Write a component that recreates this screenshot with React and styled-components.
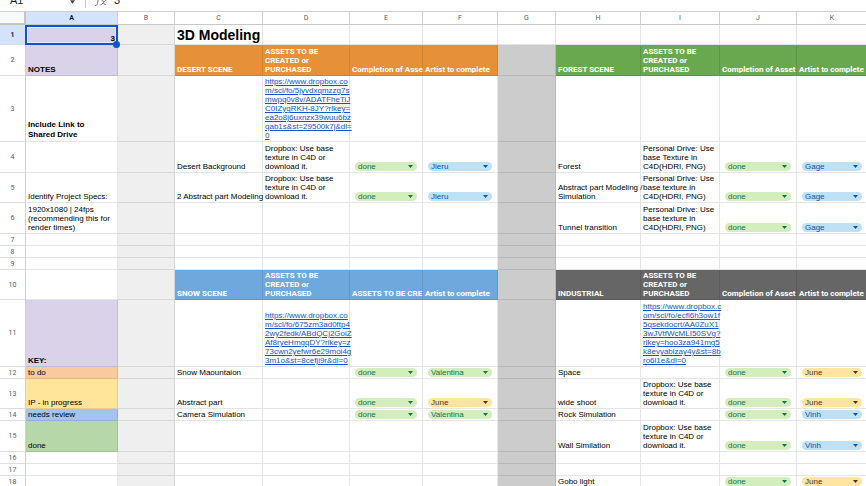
import styled, { createGlobalStyle } from 'styled-components';

const columns = [
  { name: 'A', width: 92 },
  { name: 'B', width: 57 },
  { name: 'C', width: 88 },
  { name: 'D', width: 87 },
  { name: 'E', width: 73 },
  { name: 'F', width: 75 },
  { name: 'G', width: 58 },
  { name: 'H', width: 85 },
  { name: 'I', width: 79 },
  { name: 'J', width: 77 },
  { name: 'K' },
];

const colors = {
  purple: '#d9d2e9',
  lightGrey: '#efefef',
  grey: '#cccccc',
  orange: '#e69138',
  green: '#6aa84f',
  blue: '#6fa8dc',
  dark: '#666666',
  todo: '#f9cb9c',
  progress: '#ffe599',
  review: '#a4c2f4',
  done: '#b6d7a8',
};

const chipColors = {
  done: { bg: '#d4edbc', text: '#11734b' },
  Valentina: { bg: '#d4edbc', text: '#11734b' },
  June: { bg: '#ffe5a0', text: '#473822' },
  Jieru: { bg: '#bfe1f6', text: '#0a53a8' },
  Gage: { bg: '#bfe1f6', text: '#0a53a8' },
  Vinh: { bg: '#bfe1f6', text: '#0a53a8' },
};

const artists = ['Jieru', 'Gage', 'Valentina', 'June', 'Vinh'];
const statuses = ['to do', 'IP - in progress', 'needs review', 'done'];

const assets = 'ASSETS TO BE\nCREATED or\nPURCHASED';
const dropbox = 'Dropbox: Use base\ntexture in C4D or\ndownload it.';
const drive = 'Personal Drive: Use\nbase texture in\nC4D(HDRI, PNG)';

const head = (text, bg) => ({ text, bg, bold: true, white: true });
const chip = (value) => ({ chip: value });

const rows = [
  {
    height: 20,
    cells: {
      A: { text: '3', bg: colors.purple, bold: true, right: true, selected: true },
      C: { text: '3D Modeling', title: true },
    },
  },
  {
    height: 31,
    cells: {
      A: { text: 'NOTES', bg: colors.purple, bold: true },
      C: head('DESERT SCENE', colors.orange),
      D: head(assets, colors.orange),
      E: head('Completion of Asse', colors.orange),
      F: head('Artist to complete', colors.orange),
      H: head('FOREST SCENE', colors.green),
      I: head(assets, colors.green),
      J: head('Completion of Asset', colors.green),
      K: head('Artist to complete', colors.green),
    },
  },
  {
    height: 66,
    cells: {
      A: { text: 'Include Link to\nShared Drive', bold: true, loose: true },
      D: {
        link: 'https://www.dropbox.co\nm/scl/fo/5jyvdxqmzzg7s\nmwpq0v8v/ADATFheTiJ\nC0IZygRKH-8JY?rlkey=\nea2o8j6uxnzx39wuu6bz\nqab1s&st=29500k7j&dl=\n0',
      },
    },
  },
  {
    height: 31,
    cells: {
      C: { text: 'Desert Background' },
      D: { text: dropbox },
      E: chip('done'),
      F: chip('Jieru'),
      H: { text: 'Forest' },
      I: { text: 'Personal Drive: Use\nbase Texture in\nC4D(HDRI, PNG)' },
      J: chip('done'),
      K: chip('Gage'),
    },
  },
  {
    height: 30,
    cells: {
      A: { text: 'Identify Project Specs:' },
      C: { text: '2 Abstract part Modeling' },
      D: { text: dropbox },
      E: chip('done'),
      F: chip('Jieru'),
      H: { text: 'Abstract part Modeling /\nSimulation' },
      I: { text: drive },
      J: chip('done'),
      K: chip('Gage'),
    },
  },
  {
    height: 31,
    cells: {
      A: { text: '1920x1080 | 24fps\n(recommending this for\nrender times)' },
      H: { text: 'Tunnel transition' },
      I: { text: drive },
      J: chip('done'),
      K: chip('Gage'),
    },
  },
  { height: 12, cells: {} },
  { height: 12, cells: {} },
  { height: 12, cells: {} },
  {
    height: 30,
    cells: {
      C: head('SNOW SCENE', colors.blue),
      D: head(assets, colors.blue),
      E: head('ASSETS TO BE CRE', colors.blue),
      F: head('Artist to complete', colors.blue),
      H: head('INDUSTRIAL', colors.dark),
      I: head(assets, colors.dark),
      J: head('Completion of Asset', colors.dark),
      K: head('Artist to complete', colors.dark),
    },
  },
  {
    height: 67,
    cells: {
      A: { text: 'KEY:', bg: colors.purple, bold: true },
      D: {
        link: 'https://www.dropbox.co\nm/scl/fo/675zm3ad0ftp4\n2wy2fedk/ABdQCj2GoiZ\nAf8ryeHmgqDY?rlkey=z\n73cwn2yefwr6e29moi4g\n3m1o&st=8cefji9r&dl=0',
      },
      I: {
        link: 'https://www.dropbox.c\nom/scl/fo/ecfl6h3ow1f\n5qsekdocrt/AA0ZuX1\n3wJVtfWcMLI50SVg?\nrlkey=hoo3za941mg5\nk8evyablzay4y&st=8b\nro6l1e&dl=0',
      },
    },
  },
  {
    height: 12,
    cells: {
      A: { text: 'to do', bg: colors.todo },
      C: { text: 'Snow Maountaion' },
      E: chip('done'),
      F: chip('Valentina'),
      H: { text: 'Space' },
      J: chip('done'),
      K: chip('June'),
    },
  },
  {
    height: 30,
    cells: {
      A: { text: 'IP - in progress', bg: colors.progress },
      C: { text: 'Abstract part' },
      E: chip('done'),
      F: chip('June'),
      H: { text: 'wide shoot' },
      I: { text: dropbox },
      J: chip('done'),
      K: chip('June'),
    },
  },
  {
    height: 12,
    cells: {
      A: { text: 'needs review', bg: colors.review },
      C: { text: 'Camera Simulation' },
      E: chip('done'),
      F: chip('Valentina'),
      H: { text: 'Rock Simulation' },
      J: chip('done'),
      K: chip('Vinh'),
    },
  },
  {
    height: 31,
    cells: {
      A: { text: 'done', bg: colors.done },
      H: { text: 'Wall Similation' },
      I: { text: dropbox },
      J: chip('done'),
      K: chip('Vinh'),
    },
  },
  { height: 12, cells: {} },
  { height: 12, cells: {} },
  {
    height: 12,
    cells: {
      H: { text: 'Gobo light' },
      J: chip('done'),
      K: chip('June'),
    },
  },
];

const fillFor = (column, rowIndex, cell) => {
  if (cell.bg) return cell.bg;
  if (column === 'B') return colors.lightGrey;
  if (column === 'G' && rowIndex > 0) return colors.grey;
  return '#ffffff';
};

const Chip = ({ value, label }) => {
  const options = artists.includes(value) ? artists : statuses;

  return (
    <ChipStyled $palette={chipColors[value]}>
      <select aria-label={label} defaultValue={value}>
        {options.map((option) => (
          <option key={option}>{option}</option>
        ))}
      </select>
      <svg viewBox="0 0 5 3" aria-hidden="true">
        <path d="M0 0h5L2.5 3z" />
      </svg>
    </ChipStyled>
  );
};

const CellContent = ({ cell, label }) => {
  if (cell.chip) return <Chip value={cell.chip} label={label} />;
  if (cell.link) {
    return (
      <CellLink href={cell.link.replaceAll('\n', '')}>{cell.link}</CellLink>
    );
  }
  return (
    <CellText
      $bold={cell.bold}
      $white={cell.white}
      $right={cell.right}
      $loose={cell.loose}
      $title={cell.title}
    >
      {cell.text}
    </CellText>
  );
};

const App = () => {
  return (
    <Page>
      <GlobalStyle />
      <FormulaBar>
        <NameBox aria-label="Name box" defaultValue="A1" />
        <BarArrow viewBox="0 0 6 4" aria-hidden="true">
          <path d="M0 0h6L3 4z" />
        </BarArrow>
        <BarDivider />
        <FxIcon viewBox="0 0 12 12" aria-hidden="true">
          <path d="M0 11.300c1.600.5 2.200-.4 2.500-2L3.600 3.500C4 1.500 4.600.8 6 1.100M1.500 5.500h4M5.800 5.800c1.700-.5 2.100.6 2.600 2.200.5 1.900 1 3.200 2.800 2.500M11.500 5.800C9.500 5.800 8 10.800 5.500 10.800" />
        </FxIcon>
        <FormulaInput aria-label="Formula" defaultValue="3" />
      </FormulaBar>

      <Sheet>
        <colgroup>
          <Col $width={26} />
          {columns.map((column) => (
            <Col key={column.name} $width={column.width} />
          ))}
        </colgroup>
        <thead>
          <tr>
            <Corner />
            {columns.map(({ name }) => (
              <ColumnHeader key={name} scope="col" $active={name === 'A'}>
                {name}
              </ColumnHeader>
            ))}
          </tr>
        </thead>
        <tbody>
          {rows.map((row, index) => (
            <Row key={index} $height={row.height}>
              <RowHeader scope="row" $active={index === 0}>
                {index + 1}
              </RowHeader>
              {columns.map(({ name }) => {
                const cell = row.cells[name] || {};
                return (
                  <Cell
                    key={name}
                    $fill={fillFor(name, index, cell)}
                    $inset={Boolean(cell.chip)}
                    $selected={cell.selected}
                  >
                    {(cell.text || cell.link || cell.chip) && (
                      <CellContent cell={cell} label={`${name}${index + 1}`} />
                    )}
                    {cell.selected && <Selection />}
                  </Cell>
                );
              })}
            </Row>
          ))}
        </tbody>
      </Sheet>
    </Page>
  );
};

const GlobalStyle = createGlobalStyle`
  * {
    box-sizing: border-box;
  }

  body {
    margin: 0;
    overflow: hidden;
    background-color: #fff;
    font-family: 'Liberation Sans', Arial, sans-serif;
  }
`;

const Page = styled.div`
  min-height: 100vh;
  background-color: #fff;
`;

const FormulaBar = styled.div`
  display: flex;
  align-items: flex-end;
  height: 11px;
  padding: 0 0 5px 10px;
  overflow: hidden;

  input {
    height: 12px;
    padding: 0;
    border: 0;
    outline: 0;
    background: transparent;
    color: #222;
    font-family: inherit;
    font-size: 11px;
    line-height: 12px;
  }
`;

const NameBox = styled.input`
  width: 60px;
`;

const BarArrow = styled.svg`
  width: 5px;
  height: 4px;
  margin-bottom: 2px;
  fill: #444746;
`;

const BarDivider = styled.div`
  width: 1px;
  height: 14px;
  margin: 0 9px -2px 10px;
  background-color: #c7c7c7;
`;

const FxIcon = styled.svg`
  width: 12px;
  height: 12px;
  margin-right: 7px;
  fill: none;
  stroke: #777;
  stroke-width: 1;
`;

const FormulaInput = styled.input`
  flex: 1;
`;

const Sheet = styled.table`
  width: 100%;
  min-width: 868px;
  table-layout: fixed;
  border-collapse: separate;
  border-spacing: 0;
`;

const Col = styled.col`
  width: ${({ $width }) => ($width ? `${$width}px` : 'auto')};
`;

const HeaderCell = styled.th`
  padding: 0;
  background-color: ${({ $active }) => ($active ? '#d3e3fd' : '#fff')};
  color: ${({ $active }) => ($active ? '#041e49' : '#575b5f')};
  font-family: Roboto, 'Liberation Sans', sans-serif;
  font-size: 7px;
  font-weight: ${({ $active }) => ($active ? 700 : 400)};
  line-height: 8px;
  text-align: center;
  vertical-align: middle;
`;

const ColumnHeader = styled(HeaderCell)`
  height: 14px;
  border-top: 1px solid #d0d0d0;
  border-right: 1px solid #d0d0d0;
  border-bottom: 1px solid #c8c8c8;
`;

const RowHeader = styled(HeaderCell)`
  border-right: 1px solid #d0d0d0;
  border-bottom: 1px solid #dcdcdc;
`;

const Corner = styled.td`
  padding: 0;
  border-top: 1px solid #d0d0d0;
  border-right: 2px solid #c4c4c4;
  border-bottom: 2px solid #c4c4c4;
  background-color: #f8f9fa;
`;

const Row = styled.tr`
  height: ${({ $height }) => $height}px;
`;

const Cell = styled.td`
  position: ${({ $selected }) => ($selected ? 'relative' : 'static')};
  padding: ${({ $inset }) => ($inset ? '0 5px 1px' : '0 2px 1px')};
  border-right: 1px solid rgba(0, 0, 0, 0.1);
  border-bottom: 1px solid rgba(0, 0, 0, 0.1);
  background-color: ${({ $fill }) => $fill};
  vertical-align: bottom;
`;

const CellText = styled.div`
  color: ${({ $white }) => ($white ? '#fff' : '#000')};
  font-family: ${({ $white }) =>
    $white ? "Roboto, 'Liberation Sans', sans-serif" : 'inherit'};
  font-size: ${({ $title }) => ($title ? 14 : 8)}px;
  font-weight: ${({ $bold, $title }) => ($bold || $title ? 700 : 400)};
  line-height: ${({ $title, $loose }) => ($title ? 16 : $loose ? 10 : 9)}px;
  text-align: ${({ $right }) => ($right ? 'right' : 'left')};
  white-space: pre;
`;

const CellLink = styled.a`
  display: block;
  color: #1155cc;
  font-size: 8px;
  line-height: 9px;
  white-space: pre;
  text-decoration: underline;
`;

const ChipStyled = styled.div`
  position: relative;
  height: 9px;

  select {
    display: block;
    width: 100%;
    height: 9px;
    padding: 0 10px 0 3px;
    border: 0;
    border-radius: 5px;
    appearance: none;
    background-color: ${({ $palette }) => $palette.bg};
    color: ${({ $palette }) => $palette.text};
    font-family: inherit;
    font-size: 8px;
    line-height: 9px;
  }

  svg {
    position: absolute;
    top: 3px;
    right: 4px;
    width: 5px;
    height: 3px;
    fill: ${({ $palette }) => $palette.text};
    pointer-events: none;
  }
`;

const Selection = styled.div`
  position: absolute;
  inset: 0 -1px -1px -1px;
  z-index: 1;
  border: 2px solid #0b57d0;
  box-shadow: inset 0 0 0 1px rgba(255, 255, 255, 0.5);
  pointer-events: none;

  &::after {
    content: '';
    position: absolute;
    right: -4px;
    bottom: -5px;
    width: 7px;
    height: 7px;
    border-radius: 50%;
    background-color: #0b57d0;
  }
`;

export default App;
